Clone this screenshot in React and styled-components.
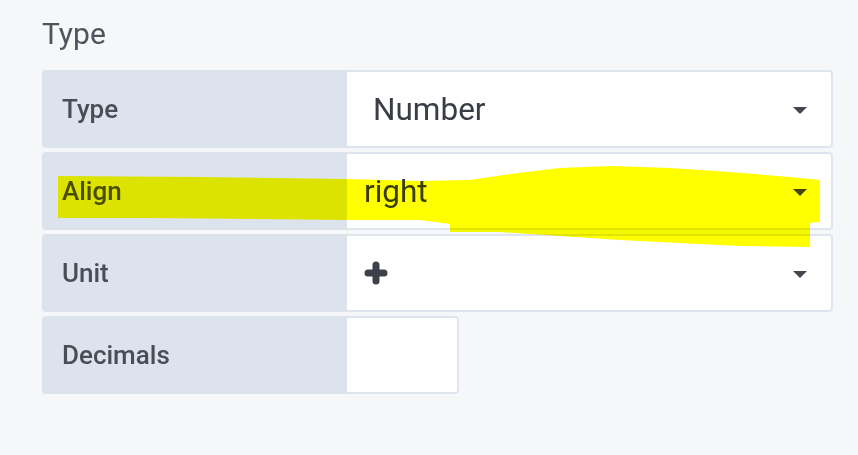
import React from "react";
import styled, { createGlobalStyle } from "styled-components";

const Global = createGlobalStyle`
  html, body { margin: 0; padding: 0; background: #f6f7f9; }
  body { font-family: Roboto, "Liberation Sans", sans-serif; }
  * { box-sizing: border-box; }
`;

const Page = styled.div`
  position: relative;
  width: 858px;
  height: 455px;
  padding: 16px 25px 0 42px;
  background: #f6f7f9;
  overflow: hidden;
`;

const Title = styled.div`
  font-size: 30px;
  line-height: 36px;
  color: #50535c;
  margin-bottom: 18px;
`;

const Rows = styled.div`
  display: flex;
  flex-direction: column;
  gap: 4px;
`;

const Row = styled.div`
  display: flex;
  height: 78px;
  width: ${(p) => (p.$short ? "417px" : "100%")};
`;

const Label = styled.div`
  width: 305px;
  flex: none;
  display: flex;
  align-items: center;
  padding-left: 20px;
  background: #dce3ed;
  border-radius: 4px 0 0 4px;
  font-size: 26px;
  font-weight: 500;
  color: #4a4d56;
`;

const Field = styled.div`
  flex: 1;
  display: flex;
  align-items: center;
  justify-content: space-between;
  padding: 0 24px 0 ${(p) => (p.$inset ? "26px" : "17px")};
  background: #fff;
  border: 2px solid #dfe5ee;
  border-left: none;
  border-radius: 0 4px 4px 0;
  font-size: 31.5px;
  color: #3a3d45;
`;

const Caret = styled.span`
  width: 0;
  height: 0;
  border-left: 7px solid transparent;
  border-right: 7px solid transparent;
  border-top: 7px solid #43464e;
  margin-top: 2px;
`;

const Plus = styled.svg`
  width: 24px;
  height: 24px;
`;

const Highlight = styled.svg`
  position: absolute;
  left: 0;
  top: 0;
  width: 858px;
  height: 455px;
  pointer-events: none;
  mix-blend-mode: multiply;
`;

export default function App() {
  return (
    <>
      <Global />
      <Page>
        <Title>Type</Title>
        <Rows>
          <Row>
            <Label>Type</Label>
            <Field $inset>
              <span>Number</span>
              <Caret />
            </Field>
          </Row>
          <Row>
            <Label>Align</Label>
            <Field>
              <span>right</span>
              <Caret />
            </Field>
          </Row>
          <Row>
            <Label>Unit</Label>
            <Field>
              <Plus viewBox="0 0 24 24">
                <path
                  d="M12 4 V20 M4 12 H20"
                  stroke="#3d4049"
                  strokeWidth="7"
                  strokeLinecap="round"
                  fill="none"
                />
              </Plus>
              <Caret />
            </Field>
          </Row>
          <Row $short>
            <Label>Decimals</Label>
            <Field />
          </Row>
        </Rows>
        <Highlight viewBox="0 0 858 455">
          <path
            fill="#ffff00"
            d="M58 176 L200 177 L347 179 L420 181 L470 180 L510 174 L560 168 L610 166 L670 168 L730 172 L790 177 L820 180 L820 222 L810 223 L810 247 L740 246 L680 243 L620 240 L560 236 L500 232 L450 232 L450 224 L420 220 L347 220 L250 219 L150 218 L58 218 Z"
          />
        </Highlight>
      </Page>
    </>
  );
}
